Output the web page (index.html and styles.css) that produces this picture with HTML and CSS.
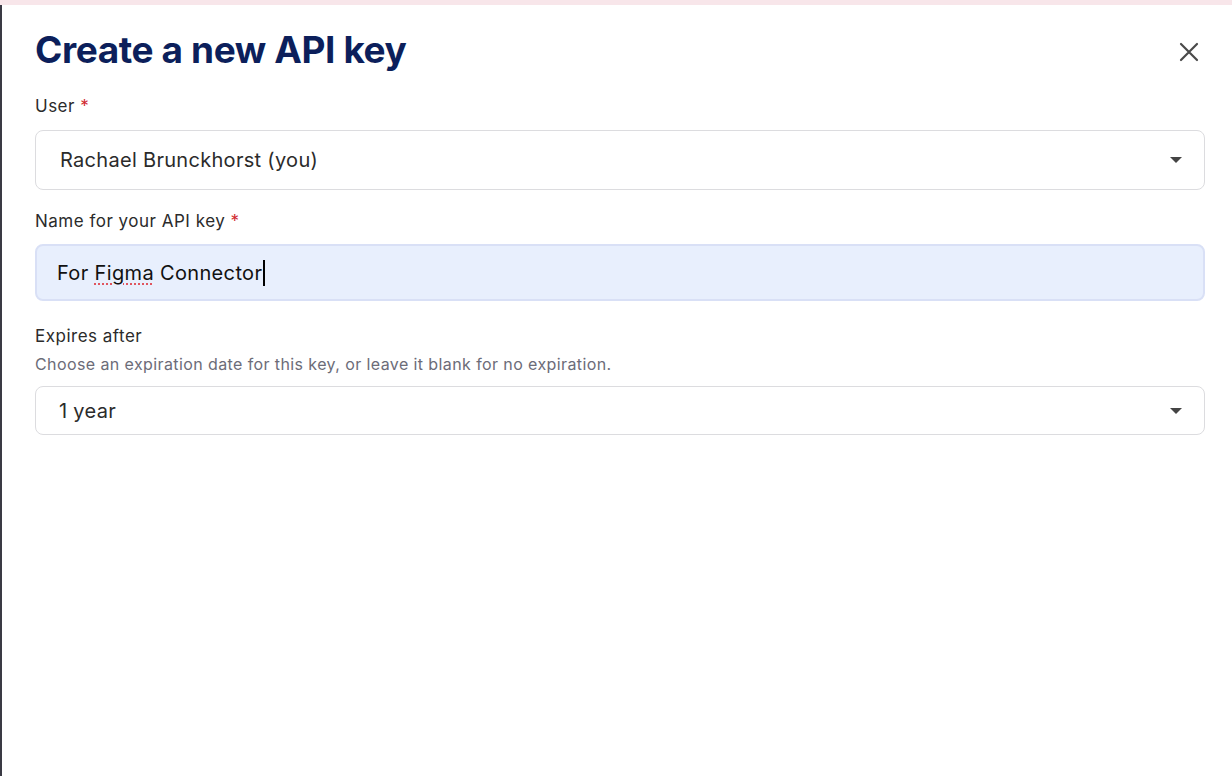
FILE: index.html
```html
<!DOCTYPE html>
<html lang="en">
<head>
  <meta charset="UTF-8">
  <title>Create a new API key</title>
  <link rel="stylesheet" href="styles.css">
</head>
<body>
  <div class="backdrop-top"></div>
  <div class="layout">
    <div class="backdrop-edge"></div>

    <div class="modal">
      <header class="modal-header">
        <h1>Create a new API key</h1>
        <button class="close-btn" aria-label="Close">
          <svg width="20" height="20" viewBox="0 0 20 20">
            <path d="M2 2 L18 18 M18 2 L2 18" stroke="#4a4a4a" stroke-width="2.2" stroke-linecap="round"/>
          </svg>
        </button>
      </header>

      <div class="field field-user">
        <label>User <span class="req">*</span></label>
        <div class="select select-lg">
          <span>Rachael Brunckhorst (you)</span>
          <span class="caret"></span>
        </div>
      </div>

      <div class="field field-name">
        <label>Name for your API key <span class="req">*</span></label>
        <div class="input">
          <span>For <span class="misspelled">Figma</span> Connector</span><span class="cursor"></span>
        </div>
      </div>

      <div class="field field-expires">
        <label>Expires after</label>
        <p class="help">Choose an expiration date for this key, or leave it blank for no expiration.</p>
        <div class="select select-sm">
          <span>1 year</span>
          <span class="caret"></span>
        </div>
      </div>
    </div>
  </div>
</body>
</html>
```

FILE: styles.css
```css
* { margin: 0; padding: 0; box-sizing: border-box; }
html, body { height: 100%; }
body {
  font-family: Inter, "Liberation Sans", sans-serif;
  background: #fff; color: #2b2b2b;
  display: flex; flex-direction: column;
  overflow: hidden;
}

.backdrop-top { height: 5px; background: #f8e6ea; flex-shrink: 0; }

.layout { flex: 1; display: flex; }
.backdrop-edge { width: 2px; background: #3a3a44; }

.modal {
  flex: 1; background: #fff;
  padding: 0 27px 0 33px;
}

.modal-header {
  display: flex; justify-content: space-between; align-items: center;
  margin-top: 23px; height: 44px;
}

.modal-header h1 {
  font-size: 37px; font-weight: 700; color: #0c1f5b;
  letter-spacing: -0.4px; line-height: 44px;
}

.close-btn {
  background: none; border: none; cursor: pointer;
  width: 20px; height: 20px; margin-right: 6px; margin-top: 4px;
  display: flex;
}

.field { display: flex; flex-direction: column; }
.field label { font-size: 17px; line-height: 20px; letter-spacing: 0.5px; color: #2b2b2b; }
.field .req { color: #d0282e; }

.field-user { margin-top: 24px; }
.field-name { margin-top: 21px; }
.field-expires { margin-top: 25px; }

.field-user label { margin-bottom: 14px; }
.field-name label { margin-bottom: 13px; }

.help {
  font-size: 16px; line-height: 20px; letter-spacing: 0.4px; color: #6c6c78;
  margin-top: 8px; margin-bottom: 12px;
}

.select {
  border: 1px solid #dcdcdf; border-radius: 8px;
  display: flex; justify-content: space-between; align-items: center;
  font-size: 20px; letter-spacing: 0.3px; color: #2b2b2b;
  padding: 0 22px 0 24px;
}
.select-lg { height: 60px; }
.select-sm { height: 49px; padding-left: 23px; }

.caret {
  width: 0; height: 0;
  border-left: 6px solid transparent; border-right: 6px solid transparent;
  border-top: 6px solid #444;
}

.input {
  height: 57px; border-radius: 8px;
  background: #e8effd; border: 2px solid #d9e0f6;
  display: flex; align-items: center;
  padding-left: 20px;
  font-size: 20px; letter-spacing: 0.35px; color: #111;
}

.misspelled {
  text-decoration: underline dotted #e0555f;
  text-decoration-thickness: 2px;
  text-underline-offset: 4px;
}

.cursor {
  width: 1.5px; height: 26px; background: #000; margin-left: 1px;
}
```
